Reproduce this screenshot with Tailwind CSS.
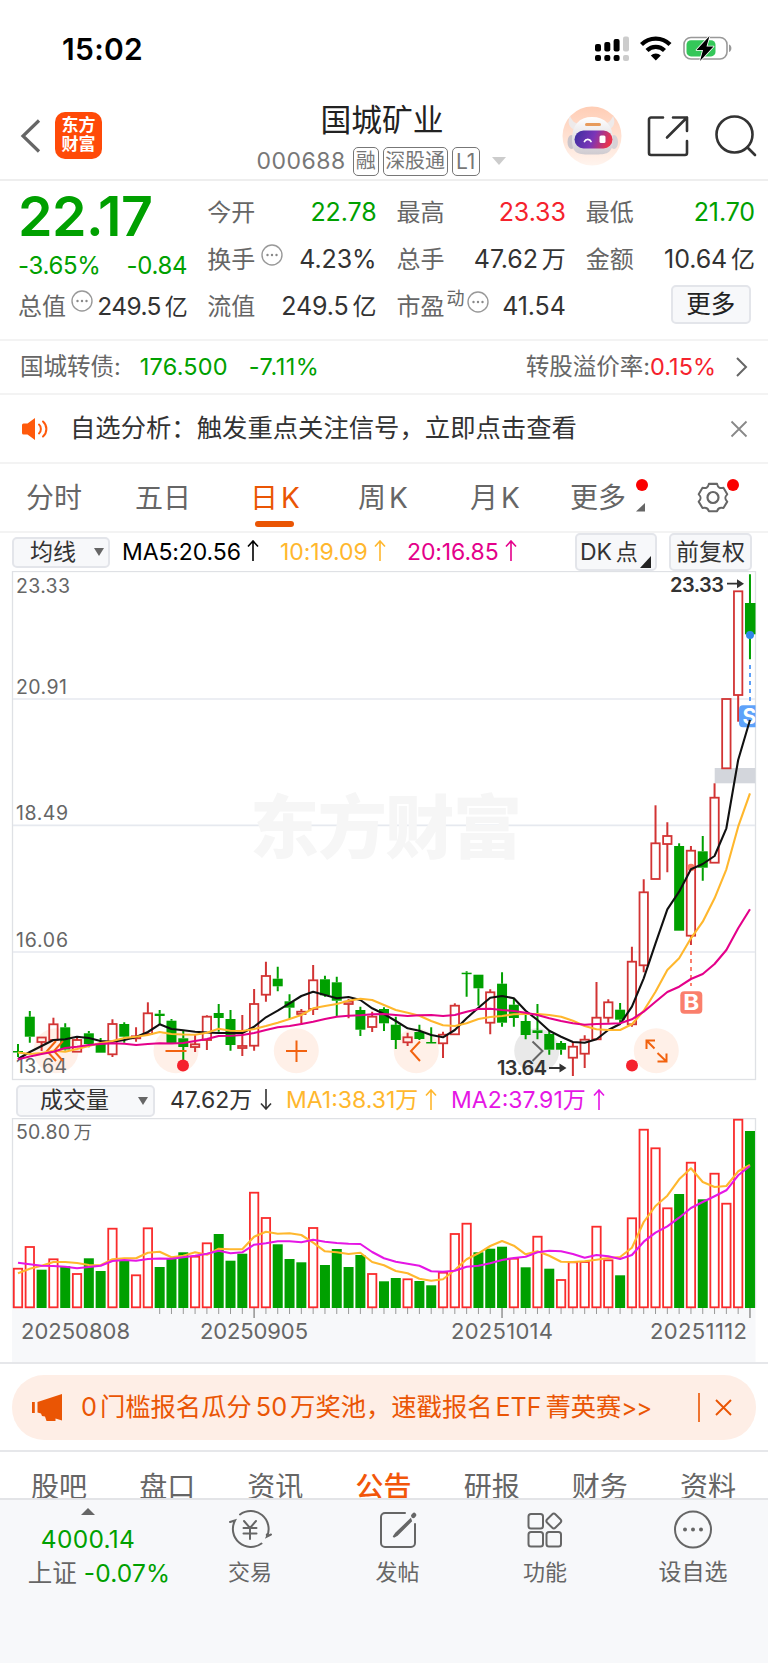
<!DOCTYPE html>
<html lang="zh-CN">
<head>
  <meta charset="UTF-8" />
  <meta name="viewport" content="width=device-width, initial-scale=1.0" />
  <title>国城矿业 000688</title>
  <script src="https://cdn.jsdelivr.net/npm/@tailwindcss/browser@4"></script>
</head>
<body class="w-[768px] h-[1663px] overflow-hidden bg-white text-[#333] font-['Inter','Noto_Sans_CJK_SC',sans-serif] whitespace-nowrap">

  <!-- Status bar -->
  <div class="h-[98px] flex items-center justify-between pl-[62px] pr-[35px]">
    <span class="text-[30px] font-semibold text-black tracking-[0.300px]">15:02</span>
    <svg width="138" height="26" viewBox="0 0 138 26">
      <g fill="#000">
        <rect x="0" y="8" width="6" height="7.500" rx="2" /><rect x="9.300" y="6" width="6" height="9.500" rx="2" /><rect x="18.600" y="3" width="6" height="12.500" rx="2" />
        <rect x="0" y="19" width="6" height="6" rx="2" /><rect x="9.300" y="19" width="6" height="6" rx="2" /><rect x="18.600" y="19" width="6" height="6" rx="2" />
      </g>
      <g fill="#ccc"><rect x="28" y="0.500" width="6" height="15" rx="2" /><rect x="28" y="19" width="6" height="6" rx="2" /></g>
      <g fill="none" stroke="#000" stroke-width="4.200">
        <path d="M46.500 8.500a20 20 0 0 1 28.500 0" />
        <path d="M52 14.500a12.300 12.300 0 0 1 17.500 0" />
      </g>
      <path d="M55.800 19.500a7 7 0 0 1 10 0L60.800 24.500z" />
      <rect x="89" y="1.500" width="43" height="21.500" rx="7" fill="none" stroke="#999" stroke-width="1.600" />
      <rect x="91.500" y="4.200" width="29" height="16.200" rx="4.500" fill="#34c759" />
      <path d="M134 8.500c3.200 1 3.200 6.500 0 7.500z" fill="#999" />
      <path d="M114.500 0L101.500 14h6.500l-3 11 13.500-14.500h-7z" fill="#000" stroke="#fff" stroke-width="1.600" stroke-linejoin="round" paint-order="stroke" />
    </svg>
  </div>

  <!-- Title bar -->
  <header class="h-[83px] flex items-start border-b-2 border-[#eee] pl-[19px]">
    <svg class="mt-[20px]" width="24" height="36" viewBox="0 0 24 36" fill="none" stroke="#666" stroke-width="3.200"><path d="M20 2.500L4 18l16 15.500" /></svg>
    <div class="ml-[12px] mt-[14px] size-[47px] rounded-[10px] bg-[#ff4a08] text-white font-bold text-[17px] leading-[19px] pt-[4px] text-center">东方<br />财富</div>
    <div class="ml-[157px] w-[246px] flex flex-col items-center">
      <h1 class="mt-px text-[30.800px] leading-[42px] text-[#222]">国城矿业</h1>
      <div class="mt-[3px] -ml-[2px] flex items-center text-[#777] text-[21px]">
        <span class="text-[23px] tracking-[0.500px] mr-[7px]">000688</span>
        <span class="h-[29px] w-[26px] border border-[#777] rounded-[5px] leading-[26px] text-[20px] text-center mr-[4px]">融</span>
        <span class="h-[29px] w-[65px] border border-[#777] rounded-[5px] leading-[26px] text-[20px] text-center mr-[4px]">深股通</span>
        <span class="h-[29px] w-[28px] border border-[#777] rounded-[5px] leading-[27px] text-[21px] text-center mr-[12px]">L1</span>
        <svg width="14" height="8" viewBox="0 0 14 8"><path d="M0 0h14L7 8z" fill="#ccc" /></svg>
      </div>
    </div>
    <svg class="ml-[57px] mt-[8px]" width="60" height="60" viewBox="0 0 60 60">
      <defs>
        <linearGradient id="halo" x1="0" y1="0" x2="0" y2="1"><stop offset="0" stop-color="#ffcdb5" /><stop offset="1" stop-color="#fff4ee" /></linearGradient>
        <linearGradient id="visor" x1="0" y1="0" x2="1" y2="0.200"><stop offset="0" stop-color="#3b2f9e" /><stop offset="0.550" stop-color="#7a35b8" /><stop offset="1" stop-color="#e8344e" /></linearGradient>
        <linearGradient id="shell" x1="0" y1="0" x2="0" y2="1"><stop offset="0" stop-color="#fff" /><stop offset="1" stop-color="#cfcbd0" /></linearGradient>
      </defs>
      <circle cx="30" cy="30" r="29.500" fill="url(#halo)" />
      <path d="M8 10c-3 6-1 12 5 14l6-6c-6 0-9-3-11-8zM51 10c3 6 1 12-5 14l-6-6c6 0 9-3 11-8z" fill="#eeeaea" />
      <ellipse cx="9.500" cy="36" rx="4" ry="7" fill="#c9c4ca" /><ellipse cx="52" cy="36" rx="4" ry="7" fill="#d6d2d6" />
      <path d="M10 34C10 19 17 11 30 11s21 8 21 23-8 14.500-21 14.500S10 48.500 10 34z" fill="url(#shell)" />
      <rect x="23" y="17" width="16" height="3" rx="1.500" fill="#e79b5c" />
      <rect x="12.500" y="24.500" width="38" height="18" rx="9" fill="url(#visor)" />
      <path d="M22.500 35.500a3.500 3.500 0 0 1 6.500 0" fill="none" stroke="#fff" stroke-width="1.800" stroke-linecap="round" />
      <rect x="37.500" y="29.500" width="6" height="7.500" rx="1.500" fill="#fff" />
    </svg>
    <svg class="ml-[25px] mt-[17px]" width="42" height="42" viewBox="0 0 42 42" fill="none" stroke="#333" stroke-width="2.600" stroke-linecap="round" stroke-linejoin="round">
      <path d="M16 2.500H4a2 2 0 0 0-2 2v33.500a2 2 0 0 0 2 2h34a2 2 0 0 0 2-2V26M26 2.500h14V16M40 2.500L20 22.500" />
    </svg>
    <svg class="ml-[26px] mt-[16px]" width="44" height="44" viewBox="0 0 44 44" fill="none" stroke="#333" stroke-width="2.600" stroke-linecap="round">
      <circle cx="19.500" cy="20.500" r="18" /><path d="M32.500 33.500l7.500 7.500" />
    </svg>
  </header>

  <!-- Quote -->
  <section class="h-[158px] pt-[8px] pl-[18px] pr-[13px] grid grid-cols-4 gap-x-5 text-[25px]">
    <div>
      <div class="h-[52px] text-[55.500px] leading-[53px] font-semibold text-[#00a000] tracking-[-0.600px]">22.17</div>
      <div class="h-[42px] flex items-end justify-between text-[24px] leading-[34px] text-[#00a000] tracking-[-0.300px]"><span>-3.65%</span><span>-0.84</span></div>
      <div class="h-[42px] flex items-end justify-between leading-[36px]">
        <span class="text-[#666] text-[24px]">总值</span>
        <svg class="mb-[13px]" width="22" height="22" viewBox="0 0 22 22"><circle cx="11" cy="11" r="10" fill="none" stroke="#999" stroke-width="1.400" /><g fill="#888"><circle cx="6.500" cy="11" r="1.200" /><circle cx="11" cy="11" r="1.200" /><circle cx="15.500" cy="11" r="1.200" /></g></svg>
        <span class="text-[24.500px] tracking-[-0.600px]">249.5<span class="ml-[4px] text-[23px]">亿</span></span>
      </div>
    </div>
    <div class="leading-[47px] tracking-[-0.100px]">
      <div class="h-[47px] flex justify-between"><span class="text-[#666] text-[24px] tracking-normal">今开</span><span>
        <span class="text-[#00a000]">22.78</span></span></div>
      <div class="h-[47px] flex justify-between"><span class="flex"><span class="text-[#666] text-[24px] tracking-normal">换手</span>
        <svg class="ml-[6px] mt-[8px]" width="22" height="22" viewBox="0 0 22 22"><circle cx="11" cy="11" r="10" fill="none" stroke="#999" stroke-width="1.400" /><g fill="#888"><circle cx="6.500" cy="11" r="1.200" /><circle cx="11" cy="11" r="1.200" /><circle cx="15.500" cy="11" r="1.200" /></g></svg></span>
        <span>4.23%</span></div>
      <div class="h-[47px] flex justify-between"><span class="text-[#666] text-[24px] tracking-normal">流值</span><span>249.5<span class="ml-[4px] text-[24px]">亿</span></span></div>
    </div>
    <div class="leading-[47px] tracking-[-0.100px]">
      <div class="h-[47px] flex justify-between"><span class="text-[#666] text-[24px] tracking-normal">最高</span><span class="text-[#f5222d]">23.33</span></div>
      <div class="h-[47px] flex justify-between"><span class="text-[#666] text-[24px] tracking-normal">总手</span><span>47.62<span class="ml-[4px] text-[24px]">万</span></span></div>
      <div class="h-[47px] flex justify-between"><span class="flex"><span class="text-[#666] text-[24px] tracking-normal">市盈</span><span class="text-[#666] text-[18px] leading-[32px] ml-[2px] tracking-normal">动</span>
        <svg class="ml-[2px] mt-[8px]" width="22" height="22" viewBox="0 0 22 22"><circle cx="11" cy="11" r="10" fill="none" stroke="#999" stroke-width="1.400" /><g fill="#888"><circle cx="6.500" cy="11" r="1.200" /><circle cx="11" cy="11" r="1.200" /><circle cx="15.500" cy="11" r="1.200" /></g></svg></span>
        <span>41.54</span></div>
    </div>
    <div class="leading-[47px] tracking-[-0.100px]">
      <div class="h-[47px] flex justify-between"><span class="text-[#666] text-[24px] tracking-normal">最低</span><span class="text-[#00a000]">21.70</span></div>
      <div class="h-[47px] flex justify-between"><span class="text-[#666] text-[24px] tracking-normal">金额</span><span>10.64<span class="ml-[4px] text-[24px]">亿</span></span></div>
      <button class="mt-[2px] ml-[85px] block w-[80px] h-[39px] border-2 border-[#e3e5ea] rounded-[5px] bg-[#f7f8fa] text-[24.500px] leading-[35px] tracking-normal text-[#222]">更多</button>
    </div>
  </section>

  <!-- Convertible bond -->
  <div class="h-[56px] flex items-center border-t-2 border-b-2 border-[#f3f3f3] pl-[20px] pr-[20px] text-[23.500px] text-[#666]">
    <span>国城转债:</span>
    <span class="ml-[19px] text-[#00a000] tracking-[0.200px]">176.500</span>
    <span class="ml-[21px] text-[#00a000] tracking-[0.500px]">-7.11%</span>
    <span class="ml-auto">转股溢价率:</span><span class="text-[#f5222d]">0.15%</span>
    <svg class="ml-[19px]" width="13" height="22" viewBox="0 0 13 22" fill="none" stroke="#666" stroke-width="2"><path d="M2 2l9 9-9 9" /></svg>
  </div>

  <!-- Signal notice -->
  <div class="h-[69px] flex items-center border-b-2 border-[#f3f3f3] pl-[22px] pr-[20px]">
    <svg width="27" height="22" viewBox="0 0 27 22"><path d="M1.500 5.500H5.500L13 0v22L5.500 16.500H1.500A1.500 1.500 0 0 1 0 15V7a1.500 1.500 0 0 1 1.500-1.500z" fill="#ff5a0c" /><path d="M17 6.500c2.500 2 2.500 7 0 9M21 3.500c4.500 4 4.500 11 0 15" fill="none" stroke="#ff5a0c" stroke-width="2" stroke-linecap="round" /></svg>
    <span class="ml-[21px] text-[25.350px]">自选分析：触发重点关注信号，立即点击查看</span>
    <svg class="ml-auto" width="18" height="18" viewBox="0 0 18 18" fill="none" stroke="#888" stroke-width="1.800"><path d="M1.500 1.500l15 15M16.500 1.500l-15 15" /></svg>
  </div>

  <!-- Period tabs -->
  <nav class="relative h-[69px] flex items-center border-b-2 border-[#f3f3f3] pl-[26px] text-[28px] text-[#666]">
    <span class="w-[109px]">分时</span>
    <span class="w-[115px]">五日</span>
    <span class="w-[108px] text-[#ea5504]">日<span class="ml-[3px]">K</span></span>
    <span class="w-[112px]">周<span class="ml-[3px]">K</span></span>
    <span class="w-[100px]">月<span class="ml-[3px]">K</span></span>
    <span class="w-[66px]">更多</span>
    <svg class="mt-[20px]" width="10" height="9" viewBox="0 0 10 9"><path d="M9 0v8.500H0z" fill="#666" /></svg>
    <svg class="ml-[50px]" width="34" height="34" viewBox="0 0 34 34" fill="none" stroke="#666" stroke-width="2.200" stroke-linejoin="round">
      <path d="M12.500 2.500h9c1 4.200 3 5.300 7 4.200l4.200 7.300c-3 3-3 5 0 8l-4.200 7c-4-1-6 0-7 3.500h-9c-1-3.500-3-4.500-7-3.500l-4.200-7c3-3 3-5 0-8l4.200-7.300c4 1.100 6 0 7-4.200z" transform="translate(1.500 .6) scale(.91)" />
      <circle cx="17" cy="16.500" r="5.500" />
    </svg>
    <i class="absolute left-[636px] top-[15px] size-[12px] rounded-full bg-[#fa0000]"></i>
    <i class="absolute left-[727px] top-[15px] size-[12px] rounded-full bg-[#fa0000]"></i>
    <i class="absolute left-[255px] top-[57px] w-[39px] h-[6px] rounded-full bg-[#ea5504]"></i>
  </nav>

  <!-- Moving averages -->
  <div class="h-[38px] flex items-center pl-[12px] text-[23px] tracking-[-0.100px]">
    <button class="w-[98px] h-[31px] flex items-center border-2 border-[#e3e5ea] rounded-[5px] bg-[#f7f8fa] pl-[16px] text-[23px]">均线<svg class="ml-[18px]" width="10" height="8" viewBox="0 0 10 8"><path d="M0 0h10L5 8z" fill="#666" /></svg></button>
    <span class="ml-[12px] w-[158px] text-black">MA5:20.56<svg class="inline ml-[6px] -mt-[5px]" width="12" height="21" viewBox="0 0 12 21" fill="none" stroke="currentColor" stroke-width="1.600"><path d="M6 21V1M1 6.500l5-5.500 5 5.500" /></svg></span>
    <span class="w-[127px] text-[#ffb72d]">10:19.09<svg class="inline ml-[6px] -mt-[5px]" width="12" height="21" viewBox="0 0 12 21" fill="none" stroke="currentColor" stroke-width="1.600"><path d="M6 21V1M1 6.500l5-5.500 5 5.500" /></svg></span>
    <span class="w-[168px] text-[#e4008a]">20:16.85<svg class="inline ml-[6px] -mt-[5px]" width="12" height="21" viewBox="0 0 12 21" fill="none" stroke="currentColor" stroke-width="1.600"><path d="M6 21V1M1 6.500l5-5.500 5 5.500" /></svg></span>
    <button class="h-[38px] w-[82px] flex items-center border-2 border-[#e3e5ea] rounded-[5px] bg-[#f7f8fa] pl-[3px]">DK<span class="ml-[4px] text-[22px]">点</span><svg class="mt-[20px] ml-[2px]" width="11" height="12" viewBox="0 0 11 12"><path d="M11 0v12H0z" fill="#222" /></svg></button>
    <button class="ml-[12px] h-[38px] w-[83px] border-2 border-[#e3e5ea] rounded-[5px] bg-[#f7f8fa] text-[23px] leading-[34px] tracking-normal">前复权</button>
  </div>

  <!-- Candles -->
  <svg id="kline" class="block" width="768" height="512" viewBox="0 571 768 512">
    <rect x="12.500" y="571.500" width="743" height="508" fill="none" stroke="#dfe1e5" stroke-width="1.300" />
    <path d="M13 699h742M13 825.300h742M13 952h742" stroke="#e6e9ef" stroke-width="1.700" />
    <text x="250" y="853" font-size="69" font-weight="900" fill="#f6f6f6" textLength="272">东方财富</text>
    <rect x="714.700" y="768" width="40.500" height="15.300" fill="#d3d6dc" />
    <g fill="#fff0e8">
      <circle cx="56" cy="1050.700" r="22.500" /><circle cx="176" cy="1050.700" r="22.500" /><circle cx="296.300" cy="1050.700" r="22.500" /><circle cx="416.300" cy="1050.700" r="22.500" /><circle cx="656.300" cy="1050.700" r="22.500" />
      <circle cx="536.700" cy="1050.700" r="22.500" fill="#e9e9e9" />
    </g>
    <g font-size="19.500" fill="#666">
      <text x="16" y="593" textLength="54">23.33</text>
      <text x="16" y="693.500" textLength="51">20.91</text>
      <text x="16" y="819.500" textLength="52">18.49</text>
      <text x="16" y="946.500" textLength="52">16.06</text>
      <text x="16" y="1073" textLength="51">13.64</text>
    </g>
    <g id="candles"></g>
    <g fill="none" stroke="#f2620f" stroke-width="2">
      <path d="M56 1041l-9 10 9 10M63 1041l-9 10 9 10M165.500 1051h21M286 1051h21M296.500 1040.500v21.500M420 1041.500l-9 9.500 9 10" />
      <path d="M532.500 1041.500l10 9.500-10 10" stroke="#666" />
      <path d="M654.500 1048.500l-8-8M646.500 1049v-8.500h8.500M657.500 1053l9 8.500M666.500 1053.500v8h-9" />
    </g>
    <circle cx="183" cy="1065.600" r="6" fill="#f5222d" /><circle cx="632" cy="1065.600" r="6" fill="#f5222d" />
    <g font-size="20" font-weight="600" fill="#333">
      <text x="670" y="591.500" textLength="54">23.33</text>
      <text x="497" y="1075.300" textLength="50">13.64</text>
    </g>
    <path d="M727 583.700h13M549 1068h13" stroke="#333" stroke-width="1.800" /><path d="M737 579.200l7 4.500-7 4.500zM559.500 1063.500l7 4.500-7 4.500z" fill="#333" />
    <path d="M691 951v35" stroke="#fa7a68" stroke-width="1.900" stroke-dasharray="4 4" />
    <circle cx="691" cy="867.500" r="3.800" fill="#fa7a68" />
    <rect x="680.300" y="991.300" width="22" height="22.500" rx="4" fill="#fa7f6c" />
    <text x="683.300" y="1010" font-size="21" font-weight="700" fill="#fff" textLength="16" lengthAdjust="spacingAndGlyphs">B</text>
    <path d="M750 665v36" stroke="#5b9ff8" stroke-width="2" stroke-dasharray="4 4" />
    <circle cx="750" cy="635" r="4" fill="#2f86e8" />
    <svg x="738" y="700" width="17.500" height="34">
      <rect x="1" y="5.300" width="22" height="22" rx="4" fill="#5ea2fa" />
      <text x="4.500" y="24" font-size="21" font-weight="700" fill="#fff">S</text>
    </svg>
    <g id="priceLines" fill="none" stroke-width="2.100" stroke-linejoin="round"></g>
  </svg>

  <!-- Volume header -->
  <div class="h-[35px] flex items-center pl-[16px] text-[23px]">
    <button class="w-[139px] h-[32px] flex items-center border-2 border-[#e3e5ea] rounded-[5px] bg-[#f7f8fa] pl-[22px] text-[23px]">成交量<svg class="ml-[29px]" width="10" height="8" viewBox="0 0 10 8"><path d="M0 0h10L5 8z" fill="#666" /></svg></button>
    <span class="ml-[15px] w-[116px]">47.62万<svg class="inline ml-[8px] -mt-[5px]" width="12" height="21" viewBox="0 0 12 21" fill="none" stroke="currentColor" stroke-width="1.600"><path d="M6 0v20M1 14.500l5 5.500 5-5.500" /></svg></span>
    <span class="w-[165px] text-[#ffb72d]">MA1:38.31万<svg class="inline ml-[7px] -mt-[5px]" width="12" height="21" viewBox="0 0 12 21" fill="none" stroke="currentColor" stroke-width="1.600"><path d="M6 21V1M1 6.500l5-5.500 5 5.500" /></svg></span>
    <span class="text-[#e516e5]">MA2:37.91万<svg class="inline ml-[7px] -mt-[5px]" width="12" height="21" viewBox="0 0 12 21" fill="none" stroke="currentColor" stroke-width="1.600"><path d="M6 21V1M1 6.500l5-5.500 5 5.500" /></svg></span>
  </div>

  <!-- Volume -->
  <svg id="volume" class="block" width="768" height="244" viewBox="0 1118 768 244">
    <path d="M12.500 1308V1118.600H755.500V1308" fill="none" stroke="#dfe1e5" stroke-width="1.300" />
    <rect x="12" y="1308" width="743.500" height="54" fill="#f7f8fa" />
    <text x="16" y="1138.700" font-size="19.500" fill="#666" textLength="54">50.80</text>
    <text x="73.500" y="1138.700" font-size="18.500" fill="#666">万</text>
    <g id="bars"></g>
    <g id="volumeLines" fill="none" stroke-width="2.100" stroke-linejoin="round"></g>
    <g font-size="22" fill="#666">
      <text x="21" y="1338.700" textLength="109">20250808</text>
      <text x="200" y="1338.700" textLength="108">20250905</text>
      <text x="451" y="1338.700" textLength="102">20251014</text>
      <text x="650" y="1338.700" textLength="97">20251112</text>
    </g>
  </svg>

  <!-- Promo banner -->
  <div class="h-[90px] border-t-2 border-b-2 border-[#e6e7ea] px-[12px] pt-[11px]">
    <div class="h-[65px] rounded-[32px] bg-[#feeee6] flex items-center pl-[20px] pr-[24px] text-[#ea5504]">
      <svg width="31" height="27" viewBox="0 0 31 27" fill="#ea5504"><path d="M0 8h2.800v11H0zM5.500 8L30 0v26.500l-6.500-2V27h-9l-1.500-4.500-3-.5-1-2.500-3.500-1z" /></svg>
      <span class="ml-[18px] text-[25.300px]">0<span class="ml-[3px]">门槛报名瓜分</span><span class="ml-[4px] mr-[3px]">50</span>万奖池，速戳报名<span class="ml-[3px] mr-[4px] text-[25px]">ETF</span>菁英赛<span class="text-[24px] tracking-[-1px]">&gt;&gt;</span></span>
      <i class="ml-auto mr-[15px] w-[2px] h-[29px] bg-[#ea5504]/80"></i>
      <svg width="17" height="17" viewBox="0 0 17 17" fill="none" stroke="#ea5504" stroke-width="1.900"><path d="M1 1l15 15M16 1L1 16" /></svg>
    </div>
  </div>

  <!-- Content tabs, cut by the bottom bar -->
  <nav class="h-[46px] overflow-hidden flex justify-between pl-[31px] pr-[32px] text-[28px] leading-[71px] text-[#666]">
    <span>股吧</span><span>盘口</span><span>资讯</span><span class="text-[#f2560a] font-medium">公告</span><span>研报</span><span>财务</span><span>资料</span>
  </nav>

  <!-- Bottom bar -->
  <footer class="h-[165px] bg-[#f7f8fa] border-t-2 border-[#e3e4e7] flex text-[22px] text-[#666]">
    <div class="w-[176px] flex flex-col items-center">
      <svg class="mt-[8px]" width="14" height="7" viewBox="0 0 14 7"><path d="M7 0l7 7H0z" fill="#666" /></svg>
      <span class="mt-[7px] leading-[34px] text-[24.500px] tracking-[0.300px] text-[#00a000]">4000.14</span>
      <span class="ml-[22px] leading-[34px] text-[24.500px]">上证<span class="ml-[7px] text-[#00a000] tracking-[0.200px]">-0.07%</span></span>
    </div>
    <div class="w-[148px] flex flex-col items-center pt-[9px]">
      <svg width="44" height="42" viewBox="0 0 44 42" fill="none" stroke="#666" stroke-width="2" stroke-linecap="round">
        <path d="M12 5.500A18 18 0 0 1 39 27.500l4-2M2 13l5-1.500A18 18 0 0 0 33.500 34.500M39 27.500l-.2-2" />
        <path d="M16 12l6 7 6-7M22 19v11M15.500 19h13M15.500 24.500h13" />
      </svg>
      <span class="mt-[3px] leading-[36px]">交易</span>
    </div>
    <div class="w-[147px] flex flex-col items-center pt-[9px]">
      <svg width="40" height="42" viewBox="0 0 40 42" fill="none" stroke="#666" stroke-width="2" stroke-linecap="round">
        <path d="M27 4H7a4 4 0 0 0-4 4v26a4 4 0 0 0 4 4h26a4 4 0 0 0 4-4V15" />
        <path d="M32.500 10.500L18 24.500l-2.500 3.500L19 26 33 12z" fill="#666" /><path d="M35.300 6.800l.8-.8" stroke-width="4.500" />
      </svg>
      <span class="mt-[3px] leading-[36px]">发帖</span>
    </div>
    <div class="w-[148px] flex flex-col items-center pt-[9px]">
      <svg width="40" height="42" viewBox="0 0 40 42" fill="none" stroke="#666" stroke-width="2" stroke-linejoin="round">
        <rect x="3.500" y="5" width="14.500" height="14.500" rx="2.500" /><rect x="3.500" y="23" width="14.500" height="14.500" rx="2.500" /><rect x="21.500" y="23" width="14.500" height="14.500" rx="2.500" />
        <rect x="22.900" y="6.100" width="11.800" height="11.800" rx="2.500" transform="rotate(45 28.800 12)" />
      </svg>
      <span class="mt-[3px] leading-[36px]">功能</span>
    </div>
    <div class="w-[148px] flex flex-col items-center pt-[9px]">
      <svg width="40" height="42" viewBox="0 0 40 42"><circle cx="20" cy="20.500" r="18" fill="none" stroke="#666" stroke-width="2" /><g fill="#666"><circle cx="12" cy="20.500" r="2" /><circle cx="20" cy="20.500" r="2" /><circle cx="28" cy="20.500" r="2" /></g></svg>
      <span class="mt-[3px] leading-[36px] text-[23px]">设自选</span>
    </div>
  </footer>

  <script>
    // one row per trading day: up/down, high, body top, body bottom, low
    const days = [
      ['d',1044,1051,1052.5,1057],['d',1011,1016.7,1036.7,1042.7],['u',1037,1037.5,1042,1051],['u',1017.7,1024.3,1040,1040],
      ['d',1023.3,1027.3,1049.5,1050.5],['u',1036,1040,1051.7,1052],['d',1031,1033.3,1044,1047.3],['d',1038,1043,1052.7,1052.7],
      ['u',1019.3,1024,1054.3,1057],['d',1022.3,1024,1036.7,1042.7],['u',1027.3,1036.3,1038.3,1041.7],['u',1002.3,1013.3,1034,1034],
      ['d',1010,1013.7,1016,1024],['d',1019,1020.7,1043.3,1043.3],['d',1030.7,1038.3,1047,1060],['u',1035,1044.3,1047,1052],
      ['u',1015.3,1016.7,1040,1050],['d',1004,1013,1018,1031.7],['d',1010,1019,1045,1050.7],['u',1015,1046,1048,1056],
      ['u',989,1004,1045.7,1050.7],['u',961.7,976,994.7,1001.7],['d',966.7,978.7,986.3,991.3],['d',994.3,1001.3,1007.7,1018.7],
      ['u',1009,1011.7,1014,1025],['u',965,980.3,1009,1015],['d',975.7,979.3,995.3,996.7],['d',976.7,982.3,1000.7,1016],
      ['u',999,1001.7,1004,1018.3],['d',1006.7,1010,1029.7,1036],['u',1011.7,1016.7,1027,1032],['d',1007.3,1009,1023.3,1031],
      ['d',1016.7,1024.7,1040,1049],['u',1032.7,1037.3,1042.3,1046],['d',1024.7,1032,1039,1040],['d',1027.3,1042,1043,1043],
      ['u',1031.7,1034.7,1043.3,1058],['u',1003.3,1005.7,1034.3,1034.3],['d',971.3,972.7,974,996.7],['d',974.7,974.7,988.3,1005.7],
      ['u',989.3,992.3,1022.7,1034.3],['d',972.3,983.7,1022.7,1026.7],['d',998.3,1004.7,1018,1026.7],['d',1015,1021,1035,1039.3],
      ['d',1004,1030.3,1033,1039.3],['d',1030,1034,1049.7,1054.7],['d',1041,1043,1049.7,1054.7],['u',1042.7,1046.7,1057.7,1076],
      ['u',1035.3,1039.7,1053.7,1068],['u',982,1017.7,1039.3,1039.3],['u',999.3,1002.3,1017.7,1022.7],['d',1003,1009.7,1019.7,1024],
      ['u',946.7,961.7,1024.3,1026.7],['u',879.3,892.3,965.3,972.3],['u',805.3,843.3,879,879],['u',822.3,836,844,872.3],
      ['d',843.3,846,930.7,930.7],['u',846,850.7,935.7,945],['d',836,851.3,867.7,880.7],['u',783.3,797.7,862.7,862.7],
      ['u',699,699,768.3,768.3],['u',591.3,591.3,695,721.7],['d',574.3,603,634.3,659.3],
    ];
    const vols = [1268.7,1247,1269.7,1259.3,1266.3,1274,1258.3,1271,1228.7,1260.3,1275.3,1228.3,1267,1259,1252.3,1256.7,1243.3,1234,1260.7,1253.7,1192.7,1218,1244.3,1259,1262.3,1228,1265,1249,1267,1255,1274,1281.3,1278,1279.3,1281,1285.3,1272.7,1234,1223.7,1252.3,1248.7,1246.7,1258.7,1267.3,1236.7,1268.7,1280,1262.3,1262,1226.7,1260.3,1275.3,1218.3,1129.7,1148.3,1208.3,1194,1162.7,1199.3,1173.7,1203.7,1119.7,1131];
    // the volume panel closes up or down independently of the candle body
    const volUp = [0,1,3,5,8,10,11,15,16,20,21,25,30,33,36,37,38,42,44,46,47,48,49,50,52,53,54,55,57,59,60,61];

    const ma5 = [1059,1052,1046,1040,1039.3,1036.7,1038,1041,1041.7,1040,1037,1032,1024.3,1029,1030.3,1031.7,1032.5,1033,1033,1033,1026.7,1017.3,1010.7,1003.3,996,991.7,995,998.3,997,1000,1008.3,1014,1021,1028.3,1030.7,1035,1037.3,1030,1018.3,1007.7,997.7,996,998.3,1010.7,1020,1030.7,1036.7,1042,1042.7,1039.3,1030,1024,1006.7,978.3,943.3,909.3,891.7,869.3,864,856,828.3,760,720];
    const ma10 = [1052.5,1054,1053,1050.7,1051.7,1049,1046,1043,1041,1038,1036.7,1035,1032,1034,1034.5,1034.7,1032.7,1028.7,1030.7,1031,1029,1026,1022.7,1019,1015,1008.3,1006,1004,1000.7,998.7,1000,1005,1010,1012.7,1015.7,1021,1025.3,1026,1023.3,1019,1017,1016,1014.3,1014,1014,1015,1016.7,1020.7,1026,1029.3,1030,1030,1024.3,1010.7,991.7,970,958.3,938.3,921.7,898.3,869.3,826.7,793.3];
    const ma20 = [1059.3,1056.5,1054,1051.7,1048,1046.7,1045,1044,1043.3,1043.7,1045,1044,1043.3,1043.5,1043,1041,1039,1036,1035.7,1035,1033,1030,1027.3,1026,1024,1021.7,1019,1016.7,1015.7,1015.3,1014.3,1014,1015,1016,1015.3,1015,1016,1015,1011.7,1009,1008.7,1010,1011,1012.7,1015,1018.3,1021,1023.3,1024.7,1024,1023.7,1023.3,1019.3,1011.7,1001.7,992,986.7,979,974,964,950,928.3,909.3];
    const vma1 = [1273.3,1268.7,1265.7,1262,1262,1263,1265,1265.3,1259.3,1258.3,1258.3,1252.7,1251.7,1257.3,1255.7,1252.3,1254.7,1248.7,1249.3,1249.3,1236.7,1231.7,1233.7,1233.3,1235,1242.7,1251.3,1252.3,1254,1252.7,1262,1265.3,1271,1273.3,1278.7,1280.7,1279.3,1270,1259.3,1253.3,1246,1241,1245.7,1254.3,1251.3,1255.7,1261.7,1262,1261.3,1259.7,1258,1257,1247.7,1222,1206,1195.7,1179.3,1168.3,1182,1187,1186,1171.3,1165];
    const vma2 = [1262.7,1264.3,1265.7,1266,1266.7,1268.3,1267,1265.7,1261,1260,1260.7,1259,1258.5,1258.7,1257.3,1255.7,1253.7,1250.7,1253.3,1252.3,1244.7,1243.3,1241.3,1241.3,1242.3,1239.7,1241.7,1243,1243.7,1244,1252,1258.3,1261.7,1263.7,1265.7,1271.3,1271.7,1270.7,1266.7,1265.7,1263.3,1260,1258,1256.7,1252.3,1250.7,1251.3,1254,1257.7,1255,1256.3,1259,1255,1241.7,1232.7,1226.3,1217.7,1208,1202,1196.3,1190.3,1175.3,1166];

    const x = i => 18 + i * 11.806;

    document.getElementById('candles').innerHTML = days.map(([dir, high, top, bottom, low], i) => {
      const color = dir === 'u' ? '#d23434' : '#00a000';
      const wick = `<path d="M${x(i)} ${high}V${top}M${x(i)} ${bottom}V${low}" stroke="${color}" stroke-width="2"/>`;
      const h = Math.max(bottom - top, 1.5);
      const left = x(i) - 5;
      return wick + (dir === 'u'
        ? `<rect x="${left + 0.8}" y="${top}" width="8.400" height="${h}" fill="none" stroke="${color}" stroke-width="1.800"/>`
        : `<rect x="${left}" y="${top}" width="${i === 62 ? 10.5 : 10}" height="${h}" fill="${color}"/>`);
    }).join('');

    document.getElementById('bars').innerHTML = vols.map((top, i) => {
      const left = x(i) - 5;
      const major = [20, 41, 62].includes(i);
      const tick = i > 11 ? `<path d="M${x(i)} 1308v${major ? 10 : 6}" stroke="#999" stroke-width="${major ? 1.6 : 1}"/>` : '';
      return tick + (volUp.includes(i)
        ? `<rect x="${left + 0.8}" y="${top}" width="8.400" height="${1307.3 - top}" fill="#fff" stroke="#fa2c2c" stroke-width="1.800"/>`
        : `<rect x="${left}" y="${top}" width="10" height="${1308 - top}" fill="#00a000"/>`);
    }).join('');

    const line = (ys, color) => `<polyline points="${ys.map((y, i) => x(i) + ',' + y).join(' ')}" stroke="${color}"/>`;
    document.getElementById('priceLines').innerHTML = line(ma5, '#111') + line(ma10, '#ffb72d') + line(ma20, '#e4008a');
    document.getElementById('volumeLines').innerHTML = line(vma1, '#ffb72d') + line(vma2, '#e516e5');
  </script>
</body>
</html>
